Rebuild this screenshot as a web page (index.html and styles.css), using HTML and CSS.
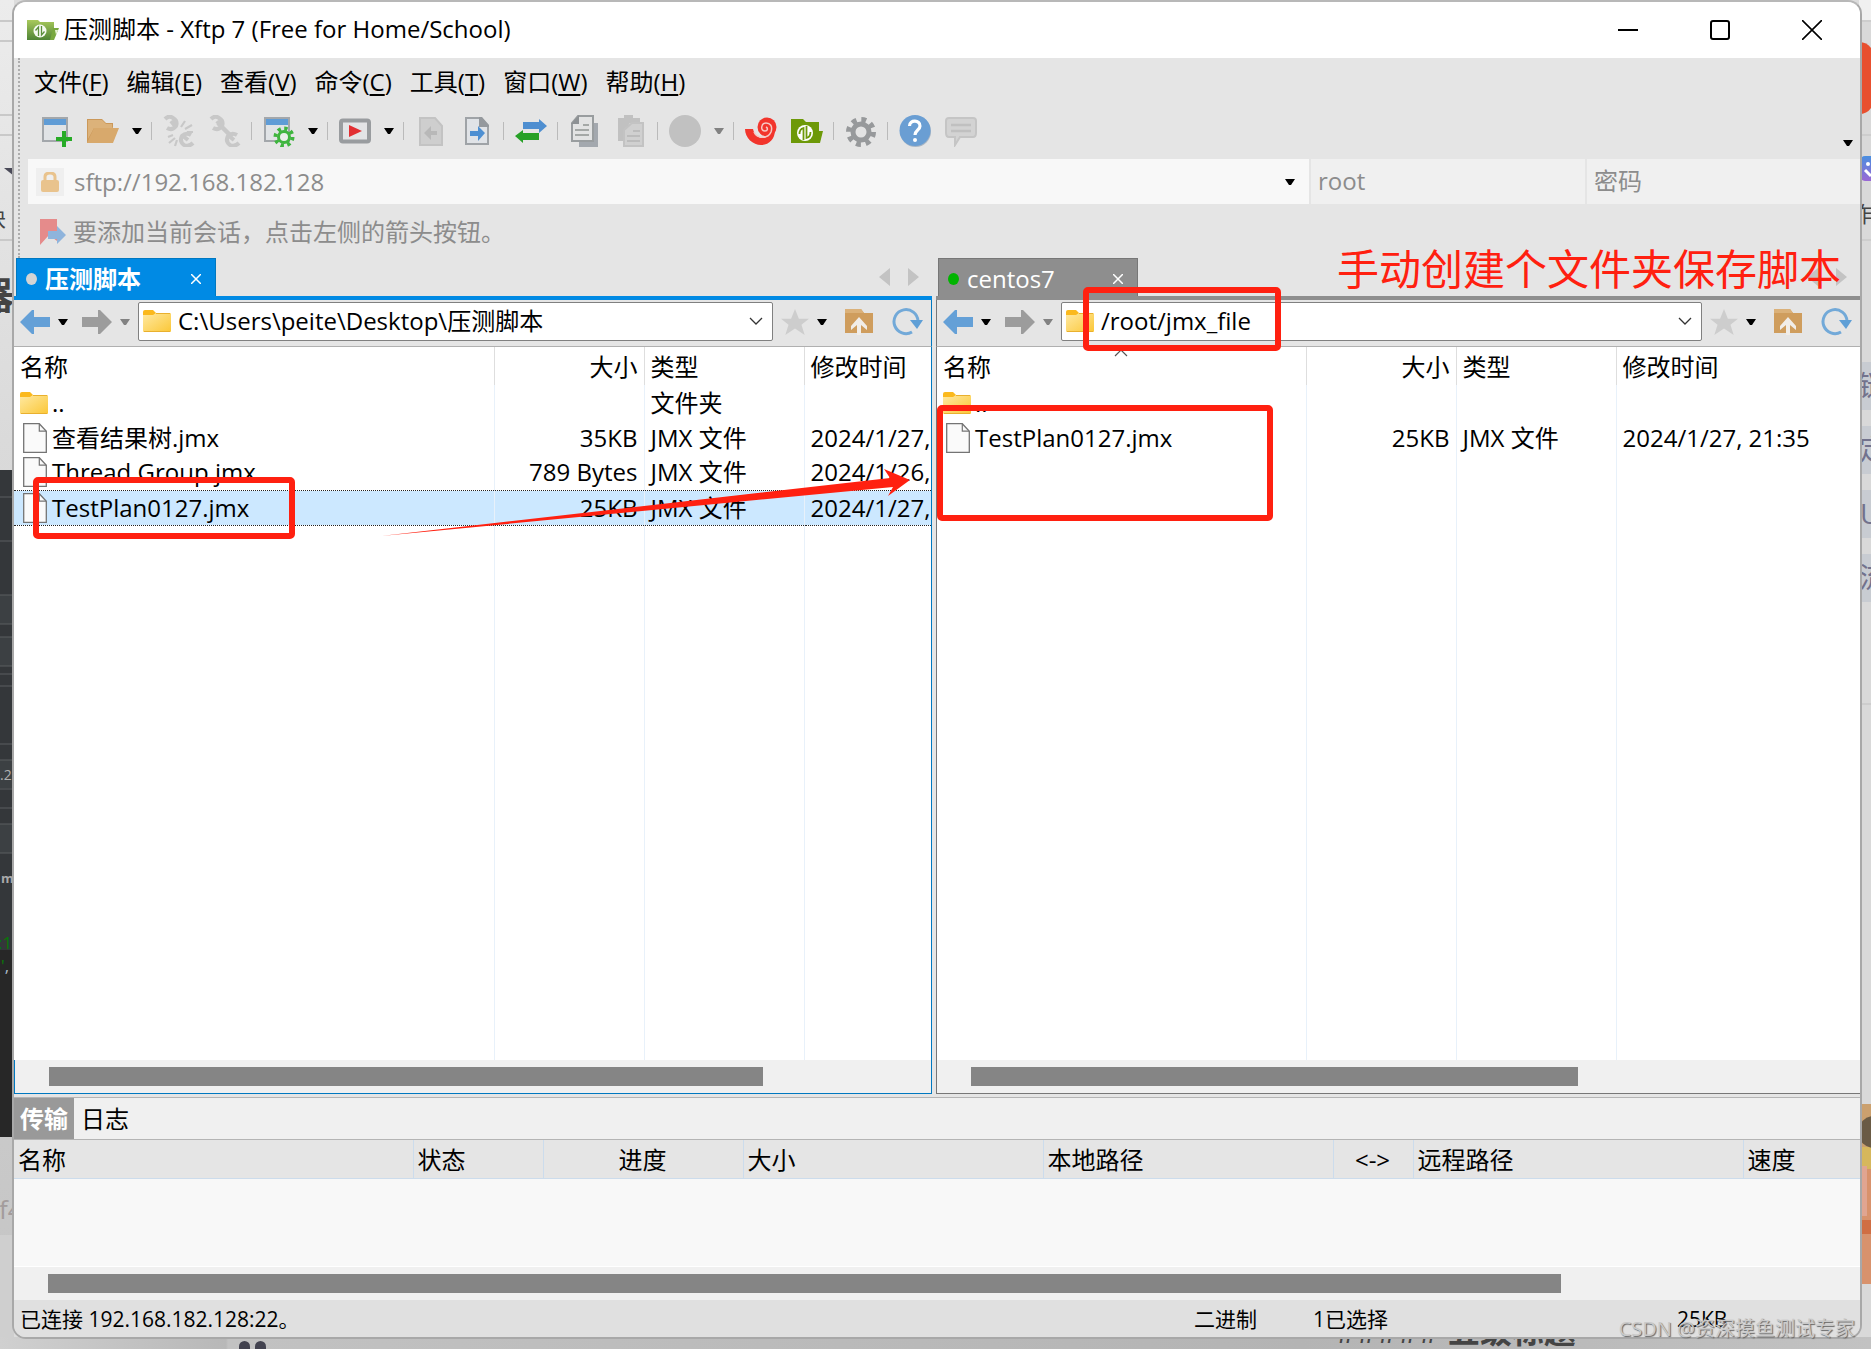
FILE: index.html
```html
<!DOCTYPE html>
<html lang="zh-CN">
<head>
<meta charset="utf-8">
<title>压测脚本 - Xftp 7</title>
<link rel="stylesheet" href="styles.css">
</head>
<body>
<svg class="defs" aria-hidden="true">
  <defs>
    <linearGradient id="yellow" x1="0" y1="0" x2="1" y2="1"><stop offset="0" stop-color="#ffe9a2"/><stop offset="1" stop-color="#fbc737"/></linearGradient>
    <linearGradient id="green" x1="0" y1="0" x2="0" y2="1"><stop offset="0" stop-color="#a9c95c"/><stop offset="1" stop-color="#4f8436"/></linearGradient>
    <linearGradient id="violet" x1="0" y1="0" x2="0" y2="1"><stop offset="0" stop-color="#4a8fe0"/><stop offset="1" stop-color="#9a68d4"/></linearGradient>
    <symbol id="folder" viewBox="0 0 28 24"><path d="M0 3a2 2 0 0 1 2-2h8l3 3-1 3H0z" fill="#fbb91d"/><path d="M0 6h10l3-2h14a1 1 0 0 1 1 1v17a1 1 0 0 1-1 1H1a1 1 0 0 1-1-1z" fill="url(#yellow)"/><path d="M1 22.500h26M13 4.500h14" stroke="#e9b02e" fill="none"/></symbol>
    <symbol id="file" viewBox="0 0 24 30"><path d="M.7.7h15.600l7 7.500v21.100H.7z" fill="#fafafa" stroke="#747474" stroke-width="1.300"/><path d="M16.300.7v7.500h7" fill="none" stroke="#747474" stroke-width="1.200"/></symbol>
    <symbol id="caret" viewBox="0 0 10 6"><path d="M0 0h10L6 6H4z" fill="currentColor"/></symbol>
    <symbol id="left" viewBox="0 0 30 24"><path d="M0 12 12 0h2v7h16v10H14v7h-2z" fill="currentColor"/></symbol>
    <symbol id="right" viewBox="0 0 30 24"><path d="M30 12 18 0h-2v7H0v10h16v7h2z" fill="currentColor"/></symbol>
    <symbol id="star" viewBox="0 0 26 24"><path d="m13 0 3.600 9H26l-7 5.500 3 9.500-9-6-9 6 3-9.500L0 9h9.400z" fill="#cdcdcd"/></symbol>
    <symbol id="up" viewBox="0 0 30 28"><path d="M1 1h16l3 4h9v20H1z" fill="#cf9d5d"/><path d="M1 1h16l3 4H1z" fill="#dbb179"/><path d="m15 9 8 9v4l-6-5v10h-4V17l-6 5v-4z" fill="#f1ede8"/></symbol>
    <symbol id="refresh" viewBox="0 0 32 28"><path d="M21 24A12 12 0 1 1 27 13" fill="none" stroke="#72a9d8" stroke-width="3"/><path d="M19 12h13l-6 9z" fill="#5f9fd6"/></symbol>
    <symbol id="x" viewBox="0 0 10 10"><path d="m0 0 10 10M10 0 0 10" stroke="#fff" stroke-width="1.500"/></symbol>
    <symbol id="chain" viewBox="0 0 32 32"><g fill="none" stroke="#c8c8c8" stroke-width="4"><path d="M2 4q4-4 8-1 5 3 3 8-4 5-9 2M8 6l4 5M30 28q-4 4-9 2-5-4-2-9 4-4 9-1M20 21l5 4"/></g></symbol>
  </defs>
</svg>

<div class="backdrop backdrop-left" aria-hidden="true">
  <svg width="14" height="1349">
    <path d="M0 21h14M0 41h14M0 115h14M0 135h14M0 240h14" stroke="#c9c9c9" stroke-width="2"/>
    <path d="M4 168h10v8z" fill="#4a4a58"/>
    <text x="-16" y="226" font-size="22" fill="#444">块</text>
    <text x="-24" y="309" font-size="38" font-weight="700" fill="#444">器</text>
    <path d="M0 470h14v667H0z" fill="#34373a"/><path d="M0 950h14v187H0z" fill="#272727"/>
    <path d="M0 595h14v29H0zM0 637h14v29H0zM0 760h14v28H0zM0 824h14v29H0z" fill="#3c4043"/>
    <path d="M0 497h14M0 541h14M0 595h14M0 624h14M0 637h14M0 666h14M0 674h14M0 686h14M0 744h14M0 760h14M0 789h14M0 808h14M0 824h14M0 853h14" stroke="#5b5e60"/>
    <text x="0" y="780" font-size="14" fill="#b0b0b0">.2</text>
    <text x="1" y="883" font-size="13" font-weight="700" fill="#aaa">m</text>
    <text x="-2" y="949" font-size="17" fill="#087808">:1</text>
    <text x="1" y="972" font-size="17" fill="#087808">'<tspan fill="#a9b7c6">,</tspan></text>
    <path d="M0 1235h14v114H0z" fill="#cfcfcf"/>
    <text x="-1" y="1219" font-size="26" fill="#a39c9c">f4</text>
  </svg>
</div>
<div class="backdrop backdrop-right" aria-hidden="true">
  <svg width="12" height="1349">
    <path d="M0 0h12v21H0z" fill="#f0f0f0"/>
    <path d="M0 21h12M0 135h12M0 240h12M0 704h12" stroke="#cdcdcd" stroke-width="2"/>
    <path d="M0 42q8 0 12 6v60q-4 6-12 6z" fill="#e8502f"/>
    <rect x="1" y="156" width="20" height="25" rx="5" fill="url(#violet)"/><circle cx="9" cy="164" r="2" fill="#fff"/><path d="m6 170 6 6" stroke="#fff" stroke-width="3"/>
    <text x="-8" y="222" font-size="22" fill="#444">作</text>
    <path d="M0 362h12v48H0zM0 426h12v48H0zM0 490h12v48H0zM0 554h12v48H0z" fill="#c8ccd2"/>
    <g font-size="28" fill="#72728c"><text x="0" y="396">链</text><text x="0" y="460">定</text><text x="1" y="524">U</text><text x="0" y="588">流</text></g>
    <path d="M0 1104h12v180H0z" fill="#d8926c"/><path d="M0 1104h12v43H0z" fill="#cba06e"/><path d="M0 1147h12v22H0z" fill="#d6b75c"/><circle cx="15" cy="1132" r="16" fill="#6a5b45"/><path d="M0 1166h8v50H0z" fill="#e0a591"/><path d="M0 1220h12v14H0z" fill="#d06e43"/>
  </svg>
</div>
<div class="backdrop backdrop-bottom" aria-hidden="true">
  <span class="quote-dot dot-a"></span><span class="quote-dot dot-b"></span>
  <span class="md-title"><span class="hashes">#####</span> 五级标题</span>
</div>

<main class="window">
  <header class="titlebar">
    <svg class="app-icon" viewBox="0 0 32 22"><path d="M0 1h11l2 2h14v18H0z" fill="url(#green)"/><path d="M26 9h6l-5 12h-4z" fill="#79a83f"/><path d="M28 11h3l-2 5z" fill="#e8f3d5"/><circle cx="13" cy="12" r="6.500" fill="#f6faf2"/><path d="M11.500 17V8l-3 3.500M14.500 7v9l3-3.500" stroke="#5b8f3c" stroke-width="1.300" fill="none"/></svg>
    <h1 class="title">压测脚本 - Xftp 7 (Free for Home/School)</h1>
    <div class="win-buttons">
      <button class="win-btn" aria-label="最小化"><svg width="20" height="20"><path d="M0 10h20" stroke="#000" stroke-width="2"/></svg></button>
      <button class="win-btn" aria-label="最大化"><svg width="20" height="20"><rect x="1" y="1" width="18" height="18" rx="2" fill="none" stroke="#000" stroke-width="2"/></svg></button>
      <button class="win-btn" aria-label="关闭"><svg width="20" height="20"><path d="m0 0 20 20M20 0 0 20" stroke="#000" stroke-width="1.600"/></svg></button>
    </div>
  </header>

  <div class="bars">
    <nav class="menu">
      <button>文件(<u>F</u>)</button><button>编辑(<u>E</u>)</button><button>查看(<u>V</u>)</button><button>命令(<u>C</u>)</button><button>工具(<u>T</u>)</button><button>窗口(<u>W</u>)</button><button>帮助(<u>H</u>)</button>
    </nav>
    <div class="toolbar">
      <button class="tool" aria-label="新建"><svg viewBox="0 0 32 32"><path d="M2 3h24v23H2z" fill="#e0e3e6" stroke="#a3a7ab" stroke-width="2"/><path d="M3 4h22v6H3z" fill="#5f9cd6"/><path d="M21 16h4v6h6v4h-6v6h-4v-6h-6v-4h6z" fill="#27ab27"/></svg></button>
      <button class="tool" aria-label="打开"><svg viewBox="0 0 32 32"><path d="M0 4h15l4 4h7v4l-5 16H0z" fill="#cb9859"/><path d="M1 5h14l4 4h6v4H7L1 24z" fill="#dcb27a"/><path d="M7 13h25l-6 15H0z" fill="#d8a96c"/></svg></button>
      <button class="drop" aria-label="打开选项"><svg><use href="#caret"/></svg></button>
      <span class="sep"></span>
      <button class="tool" aria-label="断开"><svg viewBox="0 0 32 32"><use href="#chain"/><path d="m18 12 4-6M22 14l7-4M24 17h6M10 20l-5 2M12 23l-6 5M14 25l-2 6" stroke="#c8c8c8" stroke-width="2.200"/></svg></button>
      <button class="tool" aria-label="重新连接"><svg viewBox="0 0 32 32"><use href="#chain"/><path d="m9 8 14 14" stroke="#c8c8c8" stroke-width="4.500"/></svg></button>
      <span class="sep"></span>
      <button class="tool" aria-label="属性"><svg viewBox="0 0 32 32"><path d="M2 3h24v23H2z" fill="#e0e3e6" stroke="#a3a7ab" stroke-width="2"/><path d="M3 4h22v6H3z" fill="#5f9cd6"/><circle cx="21" cy="22" r="8.500" fill="none" stroke="#3fb53f" stroke-width="4" stroke-dasharray="3.300 3.370"/><circle cx="21" cy="22" r="5.500" fill="#e9efe9" stroke="#3fb53f" stroke-width="3"/></svg></button>
      <button class="drop" aria-label="属性选项"><svg><use href="#caret"/></svg></button>
      <span class="sep"></span>
      <button class="tool" aria-label="同步"><svg viewBox="0 0 32 32"><rect x="2" y="5.500" width="28" height="21" rx="2" fill="#e3e4e6" stroke="#999c9f" stroke-width="4"/><path d="m10 10 13 6-13 6z" fill="#e22f33"/></svg></button>
      <button class="drop" aria-label="同步选项"><svg><use href="#caret"/></svg></button>
      <span class="sep"></span>
      <button class="tool" aria-label="后退传输"><svg viewBox="0 0 32 32"><path d="M5 3h15l7 8v19H5z" fill="#cecece" stroke="#c3c3c3" stroke-width="2"/><path d="m9 18 7-7v5h6v4h-6v5z" fill="#b8b8b8"/></svg></button>
      <button class="tool" aria-label="传输"><svg viewBox="0 0 32 32"><path d="M5 3h15l7 8v18H5z" fill="#e0e3e7" stroke="#9fa3a7" stroke-width="2"/><path d="M18 2h3l7 8v2H18z" fill="#95999d"/><path d="m24 18-7-7v5H9v5h8v5z" fill="#4d8fd2"/></svg></button>
      <span class="sep"></span>
      <button class="tool" aria-label="双向传输"><svg viewBox="0 0 32 32"><path d="M8 7h16V4l8 7-8 7v-4H8z" fill="#4e8ed0"/><path d="M24 18H8v-3L0 21l8 7v-3h16z" fill="#27a127"/></svg></button>
      <span class="sep"></span>
      <button class="tool" aria-label="复制"><svg viewBox="0 0 32 32"><path d="M10 8h19v24H10z" fill="#a3a8ae"/><path d="M9 1h15v25H3V8z" fill="#e2e3e3" stroke="#999d9f" stroke-width="2"/><path d="M10 0v9H2z" fill="#8d9194"/><path d="M14 10h6M6 15h14M6 20h14" stroke="#a4a8a6" stroke-width="2"/></svg></button>
      <button class="tool" aria-label="粘贴"><svg viewBox="0 0 32 32"><path d="M3 3h6V0h9v3h7v5H15l-5 7v11H3z" fill="#c1c1c1"/><path d="M17 8h11v23H9V15z" fill="#d0d0d0" stroke="#c3c3c3" stroke-width="2"/><path d="M12 21h13M12 26h13M18 16h7" stroke="#bcbcbc" stroke-width="2"/></svg></button>
      <span class="sep"></span>
      <button class="tool" aria-label="停止"><svg viewBox="0 0 32 32"><circle cx="16" cy="16" r="16" fill="#c1c1c1"/></svg></button>
      <button class="drop drop-dim" aria-label="停止选项"><svg><use href="#caret"/></svg></button>
      <span class="sep"></span>
      <button class="tool" aria-label="Xshell"><svg viewBox="0 0 32 32"><path d="M0 14h8c2 9 10 12 17 6l5-5c0 9-6 15-14 15S0 23 0 14z" fill="#f2352c"/><circle cx="22" cy="12" r="9.500" fill="#f2352c"/><path d="M9 17c3 7 14 7 17 0 2-6-1-9-5-9-5 0-6 8-1 8 3 0 3-3 1-4" fill="none" stroke="#f6c9c4" stroke-width="1.500"/></svg></button>
      <button class="tool" aria-label="Xftp"><svg viewBox="0 0 32 32"><path d="M0 4h12l3 3h13v9h4l-3 12H0z" fill="#6d9908"/><circle cx="14" cy="18" r="8" fill="#fff"/><path d="M12.500 25V13q-4 1-4 6M15.500 11v12q4-1 4-6" stroke="#6d9908" stroke-width="1.800" fill="none"/></svg></button>
      <span class="sep"></span>
      <button class="tool" aria-label="选项"><svg viewBox="0 0 32 32"><circle cx="16" cy="17" r="12" fill="none" stroke="#97999b" stroke-width="6" stroke-dasharray="4.700 4.720"/><circle cx="16" cy="17" r="8" fill="#e3e3e3" stroke="#97999b" stroke-width="5"/></svg></button>
      <span class="sep"></span>
      <button class="tool" aria-label="帮助"><svg viewBox="0 0 32 32"><circle cx="16.500" cy="16.500" r="15.500" fill="#a9b6c4"/><circle cx="16" cy="15.500" r="15.500" fill="#6a9ed3"/><path d="M10.500 11c0-7 11-6 10.500 0 0 4-5 4-5 9" fill="none" stroke="#fff" stroke-width="3.200"/><circle cx="16" cy="25" r="2" fill="#fff"/></svg></button>
      <button class="tool" aria-label="反馈"><svg viewBox="0 0 32 32"><path d="M4 3h24q3 0 3 3v12q0 4-3 4H15l-5 8v-8H4q-3 0-3-4V6q0-3 3-3z" fill="#d3d3d3" stroke="#c5c5c5" stroke-width="2"/><path d="M6 10h20M6 16h20" stroke="#c0c0c0" stroke-width="2.500"/></svg></button>
      <button class="drop overflow" aria-label="更多"><svg><use href="#caret"/></svg></button>
    </div>
    <form class="address">
      <div class="url">
        <span class="lock"><svg viewBox="0 0 20 20"><path d="M5 9V5q0-4 5-4t5 4v4" fill="none" stroke="#e9c38d" stroke-width="3"/><rect x="1" y="8" width="18" height="12" rx="2" fill="#e9c38d"/></svg></span>
        <input aria-label="主机" value="sftp://192.168.182.128">
        <button type="button" class="drop" aria-label="历史"><svg><use href="#caret"/></svg></button>
      </div>
      <input class="cred" aria-label="用户名" placeholder="root">
      <input class="cred" type="password" aria-label="密码" placeholder="密码">
    </form>
    <div class="hint">
      <svg viewBox="0 0 26 26"><path d="M0 0h17v22l-8-6-9 10z" fill="#e58b8b"/><path d="m26 16-9-9v5H8v8h9v5z" fill="#8fb4dc"/></svg>
      <span>要添加当前会话，点击左侧的箭头按钮。</span>
    </div>
  </div>

  <div class="panes">
    <section class="pane active">
      <div class="tabs">
        <button class="tab"><span class="dot"></span><span class="tab-name">压测脚本</span><svg class="close"><use href="#x"/></svg></button>
        <span class="arrows"><svg viewBox="0 0 40 18"><path d="M11 0v18L0 9zM29 0v18l11-9z" fill="#c3c3c3"/></svg></span>
      </div>
      <div class="nav">
        <button class="back" aria-label="后退"><svg><use href="#left"/></svg></button>
        <button class="drop" aria-label="后退历史"><svg><use href="#caret"/></svg></button>
        <button class="fwd" aria-label="前进"><svg><use href="#right"/></svg></button>
        <button class="drop drop-dim" aria-label="前进历史"><svg><use href="#caret"/></svg></button>
        <div class="path"><svg class="folder"><use href="#folder"/></svg><input aria-label="本地路径" value="C:\Users\peite\Desktop\压测脚本"><svg class="chev" viewBox="0 0 14 8"><path d="m1 1 6 6 6-6" fill="none" stroke="#333" stroke-width="1.300"/></svg></div>
        <button class="fav" aria-label="收藏"><svg><use href="#star"/></svg></button>
        <button class="drop" aria-label="收藏列表"><svg><use href="#caret"/></svg></button>
        <button class="parent" aria-label="上级目录"><svg><use href="#up"/></svg></button>
        <button class="reload" aria-label="刷新"><svg><use href="#refresh"/></svg></button>
      </div>
      <div class="list">
        <table class="files">
          <colgroup><col class="c-name-l"><col class="c-size"><col class="c-type"><col class="c-date"></colgroup>
          <thead><tr><th>名称</th><th class="num">大小</th><th>类型</th><th>修改时间</th></tr></thead>
          <tbody>
            <tr><td><span class="cell"><svg class="folder"><use href="#folder"/></svg>..</span></td><td></td><td>文件夹</td><td></td></tr>
            <tr><td><span class="cell"><svg class="file"><use href="#file"/></svg>查看结果树.jmx</span></td><td class="num">35KB</td><td>JMX 文件</td><td>2024/1/27, 21:32</td></tr>
            <tr><td><span class="cell"><svg class="file"><use href="#file"/></svg>Thread Group.jmx</span></td><td class="num">789 Bytes</td><td>JMX 文件</td><td>2024/1/26, 22:10</td></tr>
            <tr class="selected"><td><span class="cell"><svg class="file"><use href="#file"/></svg>TestPlan0127.jmx</span></td><td class="num">25KB</td><td>JMX 文件</td><td>2024/1/27, 21:35</td></tr>
            <tr class="filler"><td></td><td></td><td></td><td></td></tr>
          </tbody>
        </table>
      </div>
      <div class="scroll"><div class="thumb thumb-left"></div></div>
    </section>

    <section class="pane">
      <div class="tabs">
        <button class="tab"><span class="dot"></span><span class="tab-name">centos7</span><svg class="close"><use href="#x"/></svg></button>
        <span class="arrows"><svg viewBox="0 0 40 18"><path d="M11 0v18L0 9zM29 0v18l11-9z" fill="#c3c3c3"/></svg></span>
      </div>
      <div class="nav">
        <button class="back" aria-label="后退"><svg><use href="#left"/></svg></button>
        <button class="drop" aria-label="后退历史"><svg><use href="#caret"/></svg></button>
        <button class="fwd" aria-label="前进"><svg><use href="#right"/></svg></button>
        <button class="drop drop-dim" aria-label="前进历史"><svg><use href="#caret"/></svg></button>
        <div class="path"><svg class="folder"><use href="#folder"/></svg><input aria-label="远程路径" value="/root/jmx_file"><svg class="chev" viewBox="0 0 14 8"><path d="m1 1 6 6 6-6" fill="none" stroke="#333" stroke-width="1.300"/></svg></div>
        <button class="fav" aria-label="收藏"><svg><use href="#star"/></svg></button>
        <button class="drop" aria-label="收藏列表"><svg><use href="#caret"/></svg></button>
        <button class="parent" aria-label="上级目录"><svg><use href="#up"/></svg></button>
        <button class="reload" aria-label="刷新"><svg><use href="#refresh"/></svg></button>
      </div>
      <div class="list">
        <table class="files">
          <colgroup><col class="c-name-r"><col class="c-size"><col class="c-type"><col class="c-date"></colgroup>
          <thead><tr><th class="sorted">名称<svg class="sort" viewBox="0 0 14 8"><path d="m1 7 6-6 6 6" fill="none" stroke="#555" stroke-width="1.200"/></svg></th><th class="num">大小</th><th>类型</th><th>修改时间</th></tr></thead>
          <tbody>
            <tr><td><span class="cell"><svg class="folder"><use href="#folder"/></svg>..</span></td><td></td><td></td><td></td></tr>
            <tr><td><span class="cell"><svg class="file"><use href="#file"/></svg>TestPlan0127.jmx</span></td><td class="num">25KB</td><td>JMX 文件</td><td>2024/1/27, 21:35</td></tr>
            <tr class="filler"><td></td><td></td><td></td><td></td></tr>
          </tbody>
        </table>
      </div>
      <div class="scroll"><div class="thumb thumb-right"></div></div>
    </section>
  </div>

  <section class="transfer">
    <div class="ttabs"><button class="on">传输</button><button>日志</button></div>
    <table class="jobs">
      <colgroup><col class="j1"><col class="j2"><col class="j3"><col class="j4"><col class="j5"><col class="j6"><col class="j7"><col></colgroup>
      <thead><tr><th>名称</th><th>状态</th><th class="mid">进度</th><th>大小</th><th>本地路径</th><th class="mid">&lt;-&gt;</th><th>远程路径</th><th>速度</th></tr></thead>
    </table>
    <div class="jobs-body"></div>
    <div class="scroll"><div class="thumb thumb-bottom"></div></div>
  </section>

  <footer class="status"><span>已连接 192.168.182.128:22。</span><span>二进制</span><span>1已选择</span><span>25KB</span></footer>
</main>

<div class="mark mark-path"></div>
<div class="mark mark-remote"></div>
<div class="mark mark-local"></div>
<svg class="mark-arrow" viewBox="0 0 530 70" aria-hidden="true"><path d="M0 68 509 10 503 1 529 12 507 28 512 19z" fill="#ff2010"/></svg>
<p class="note">手动创建个文件夹保存脚本</p>
<p class="watermark">CSDN @资深摸鱼测试专家</p>
</body>
</html>
```
FILE: styles.css
```css
* { box-sizing: border-box; }
body {
  margin: 0;
  height: 100vh;
  padding: 0 9px 10px 12px;
  position: relative;
  overflow: hidden;
  background: #dcdcdc;
  color: #000;
  font: 24px/32px "Open Sans", "Noto Sans CJK SC", sans-serif;
}
button, input { font: inherit; color: inherit; border: 0; padding: 0; margin: 0; background: none; }
button { white-space: nowrap; }
input { min-width: 0; outline: 0; }
svg { display: block; flex: none; }
.defs { position: absolute; width: 0; height: 0; }

/* desktop behind the window */
.backdrop { position: absolute; overflow: hidden; }
.backdrop-left { left: 0; top: 0; bottom: 0; width: 14px; background: linear-gradient(#ececec, #dadada 440px, #c4c4c4); }
.backdrop-right { right: 0; top: 0; bottom: 0; width: 12px; background: #d9d9d9; }
.backdrop-bottom { left: 0; right: 0; bottom: 0; height: 12px; background: linear-gradient(90deg, #d0d0d0, #b8b8b8 226px, #c2c2c2 228px, #b4b4b4 1300px, #c2c2c2); }
.quote-dot { position: absolute; top: 4px; width: 11px; height: 16px; border-radius: 6px; background: #42424f; }
.dot-a { left: 239px; }
.dot-b { left: 255px; }
.md-title { position: absolute; left: 1336px; top: -22px; font-size: 32px; font-weight: 700; color: #444; white-space: nowrap; }
.hashes { font-weight: 400; }

.window {
  position: relative;
  height: 100%;
  display: flex;
  flex-direction: column;
  overflow: hidden;
  background: #e5e5e5;
  border: 2px solid #a8a8a8;
  border-top-color: #b8b8b8;
  border-radius: 14px;
}

.titlebar { display: flex; align-items: center; height: 56px; flex: none; background: #fff; padding: 0 2px 0 13px; }
.app-icon { width: 32px; height: 22px; }
.title { margin: 0 auto 2px 5px; font-size: 24px; font-weight: 400; line-height: 32px; white-space: nowrap; }
.win-buttons { display: flex; }
.win-btn { width: 92px; height: 54px; display: grid; place-items: center; }

.bars { flex: none; margin-left: 4px; border-left: 2px dotted #adadad; padding-left: 8px; }
.menu { display: flex; gap: 18px; height: 48px; padding-left: 6px; margin-bottom: 2px; }
.menu u { text-decoration-thickness: 2px; text-underline-offset: 3px; }
.toolbar { display: flex; align-items: center; height: 51px; padding: 0 1px 5px 6px; }
.tool { width: 46px; height: 32px; display: grid; place-items: center; }
.tool svg { width: 32px; height: 32px; }
.drop { width: 22px; height: 32px; flex: none; display: grid; place-items: center; color: #000; }
.drop svg { width: 10px; height: 6px; }
.drop-dim { color: #828282; }
.sep { width: 1px; height: 18px; margin: 0 4px 0 3px; background: #bababa; }
.toolbar .overflow { margin-left: auto; align-self: flex-end; height: 22px; }

.address { display: grid; grid-template-columns: minmax(0, 1fr) 274px 273px; gap: 2px; height: 45px; color: #8c8c8c; }
.url { display: flex; align-items: center; background: #f8f8f8; padding: 0 8px; gap: 10px; }
.url input { flex: 1; }
.lock { width: 28px; height: 28px; background: #efefef; display: grid; place-items: center; }
.lock svg { width: 20px; height: 20px; }
.cred { background: #f0f0f0; padding: 0 0 2px 7px; }
.cred::placeholder { color: #8c8c8c; opacity: 1; }
.hint { display: flex; align-items: center; gap: 7px; height: 54px; padding: 2px 0 0 12px; color: #8c8c8c; }
.hint svg { width: 26px; height: 26px; }

.panes { flex: 1; min-height: 0; display: grid; grid-template-columns: 918fr 924fr; gap: 4px; margin-bottom: 3px; }
.pane { --edge: #777; --tab: #8e8e8e; min-width: 0; min-height: 0; display: flex; flex-direction: column; }
.active { --edge: #0078c0; --tab: #008ae4; }
.tabs { flex: none; display: flex; justify-content: space-between; align-items: center; height: 42px; border-bottom: 4px solid var(--tab); padding: 0 13px 0 2px; }
.tab { display: flex; align-items: center; width: 200px; height: 38px; padding: 2px 14px 0 9px; background: var(--tab); border: 1px solid var(--edge); border-bottom: 0; color: #fff; text-align: left; }
.dot { width: 11px; height: 12px; border-radius: 50%; background: #00b400; margin-right: 8px; }
.active .dot { background: #d4d4d4; }
.active .tab-name { font-weight: 700; }
.close { width: 10px; height: 10px; margin-left: auto; }
.arrows svg { width: 40px; height: 18px; }

.nav { flex: none; display: flex; align-items: center; height: 47px; border-bottom: 1px solid #b0b0b0; border-left: 1px solid var(--edge); border-right: 1px solid var(--edge); padding: 0 8px 2px 6px; }
.active .nav, .active .list, .active > .scroll { border-left: 0; }
.pane:not(.active) .nav, .pane:not(.active) .list, .pane:not(.active) > .scroll { border-right: 0; }
.back svg, .fwd svg { width: 30px; height: 24px; }
.back { color: #64a0d7; }
.fwd { color: #9c9c9c; margin-left: 6px; }
.nav .drop { width: 26px; }
.path { flex: 1; min-width: 0; display: flex; align-items: center; gap: 7px; height: 39px; margin: 0 8px 2px 0; padding: 0 9px 0 4px; background: #fff; border: 1px solid #808080; border-radius: 2px; }
.path input { flex: 1; height: 32px; }
.folder { width: 28px; height: 24px; }
.chev { width: 14px; height: 8px; }
.fav svg { width: 28px; height: 26px; }
.parent { margin-left: 9px; }
.parent svg { width: 30px; height: 28px; }
.reload { margin-left: 17px; }
.reload svg { width: 32px; height: 28px; }

.list { flex: 1; min-height: 0; overflow: hidden; background: #fff; border-left: 1px solid var(--edge); border-right: 1px solid var(--edge); }
.files { table-layout: fixed; width: 980px; height: 100%; border-collapse: collapse; }
.c-name-l { width: 480px; }
.c-name-r { width: 369px; }
.c-size { width: 150px; }
.c-type { width: 160px; }
.files th, .files td { padding: 0 6px; border-right: 1px solid #e8f1fa; text-align: left; font-weight: 400; white-space: nowrap; overflow: hidden; }
.files .num { text-align: right; }
.files thead tr { height: 38px; }
.files th { border-right-color: #dedede; padding-top: 2px; }
.files tr { height: 35px; }
.files .filler { height: auto; }
.cell { display: flex; align-items: center; gap: 4px; height: 34px; }
.cell .file { width: 24px; height: 30px; margin: 0 1px 0 3px; }
.selected td { background: #cce8ff; border-top: 1px dotted #222; border-bottom: 1px dotted #222; }
.sorted { position: relative; }
.sort { position: absolute; top: 2px; left: 48%; width: 14px; height: 8px; }

.scroll { flex: none; height: 34px; background: #f0f0f0; padding: 7px 0 0 34px; }
.pane > .scroll { border: 1px solid var(--edge); border-top: 0; }
.thumb { height: 19px; background: #858585; }
.thumb-left { width: 81%; }
.thumb-right { width: 68.3%; }
.thumb-bottom { width: 83.5%; }

.transfer { flex: none; border-top: 1px solid #b4b4b4; background: #f0f0f0; }
.ttabs { display: flex; height: 42px; border-bottom: 1px solid #b4b4b4; }
.ttabs button { width: 60px; padding-top: 2px; }
.ttabs button + button { width: 62px; }
.ttabs .on { background: #999; color: #fff; font-weight: 700; }
.jobs { table-layout: fixed; width: 100%; border-collapse: collapse; background: #e5e5e5; }
.jobs th { height: 39px; padding: 2px 5px 0 4px; text-align: left; font-weight: 400; border-right: 1px solid #ccdcec; border-bottom: 1px solid #ccdcec; white-space: nowrap; }
.jobs th:last-child { border-right: 0; }
.jobs .mid { text-align: center; }
.j1 { width: 399px; }
.j2 { width: 130px; }
.j3 { width: 200px; }
.j4 { width: 300px; }
.j5 { width: 290px; }
.j6 { width: 80px; }
.j7 { width: 330px; }
.jobs-body { height: 88px; background: #f8f8f8; border-bottom: 1px solid #fff; }
.transfer .scroll { height: 33px; }
.status { flex: none; display: grid; grid-template-columns: 1174px 119px 364px 1fr; height: 37px; padding: 3px 0 0 6px; background: #e0e0e0; font-size: 21px; white-space: nowrap; }

/* annotations drawn over the window */
.mark { position: absolute; border: 6px solid #ff2010; border-radius: 5px; }
.mark-path { left: 1083px; top: 287px; width: 198px; height: 64px; }
.mark-remote { left: 937px; top: 405px; width: 336px; height: 116px; }
.mark-local { left: 33px; top: 477px; width: 262px; height: 62px; }
.mark-arrow { position: absolute; left: 381px; top: 468px; width: 530px; height: 70px; }
.note { position: absolute; left: 1337px; top: 239px; margin: 0; font-size: 42px; line-height: 60px; color: #ff2010; white-space: nowrap; }
.watermark { position: absolute; right: 16px; bottom: 4px; margin: 0; font-size: 20px; color: #c9c9c9; text-shadow: 1px 1px 1px #666; white-space: nowrap; }
```
